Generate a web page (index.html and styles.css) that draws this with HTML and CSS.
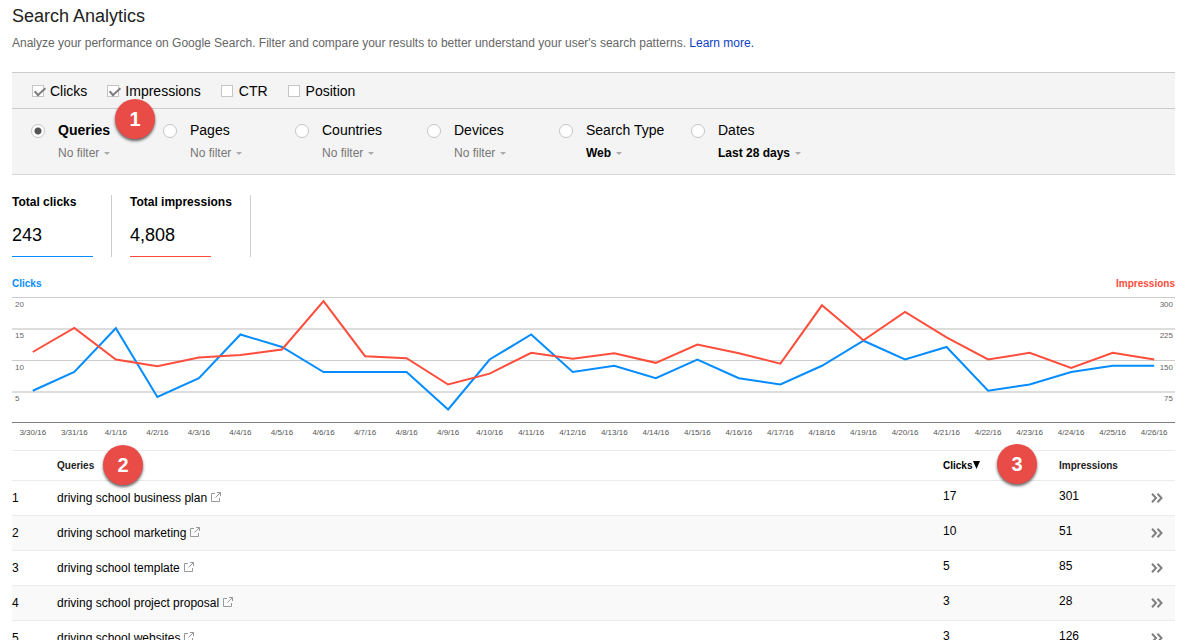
FILE: index.html
```
<!DOCTYPE html>
<html lang="en">
<head>
  <meta charset="UTF-8">
  <title>Search Analytics</title>
  <meta name="viewport" content="width=device-width, initial-scale=1.0">
  <link rel="stylesheet" href="styles.css">
</head>
<body>

<div class="container">
  <h1>Search Analytics</h1>
  <p class="intro">Analyze your performance on Google Search. Filter and compare your results to better understand your user's search patterns. <a href="#">Learn more.</a></p>

  <form class="panel">
    <div class="metrics">
      <label><input type="checkbox" checked>Clicks</label>
      <label><input type="checkbox" checked>Impressions</label>
      <label><input type="checkbox">CTR</label>
      <label><input type="checkbox">Position</label>
    </div>
    <div class="dimensions">
      <div class="dimension">
        <input type="radio" name="dimension" id="dim-queries" checked>
        <label for="dim-queries">Queries</label>
        <span class="filter"><select aria-label="Queries filter"><option>No filter</option></select></span>
        <span class="badge badge-1">1</span>
      </div>
      <div class="dimension">
        <input type="radio" name="dimension" id="dim-pages">
        <label for="dim-pages">Pages</label>
        <span class="filter"><select aria-label="Pages filter"><option>No filter</option></select></span>
      </div>
      <div class="dimension">
        <input type="radio" name="dimension" id="dim-countries">
        <label for="dim-countries">Countries</label>
        <span class="filter"><select aria-label="Countries filter"><option>No filter</option></select></span>
      </div>
      <div class="dimension">
        <input type="radio" name="dimension" id="dim-devices">
        <label for="dim-devices">Devices</label>
        <span class="filter"><select aria-label="Devices filter"><option>No filter</option></select></span>
      </div>
      <div class="dimension">
        <input type="radio" name="dimension" id="dim-type">
        <label for="dim-type">Search Type</label>
        <span class="filter active"><select aria-label="Search type filter"><option>Web</option></select></span>
      </div>
      <div class="dimension">
        <input type="radio" name="dimension" id="dim-dates">
        <label for="dim-dates">Dates</label>
        <span class="filter active"><select aria-label="Dates filter"><option>Last 28 days</option></select></span>
      </div>
    </div>
  </form>

  <div class="totals">
    <div class="total clicks">
      <h2>Total clicks</h2>
      <p>243</p>
    </div>
    <div class="total impressions">
      <h2>Total impressions</h2>
      <p>4,808</p>
    </div>
  </div>

  <div class="legend">
    <span class="legend-clicks">Clicks</span>
    <span class="legend-impressions">Impressions</span>
  </div>
  <div class="chart">
    <div class="band"><span>20</span><span>300</span></div>
    <div class="band"><span>15</span><span>225</span></div>
    <div class="band"><span>10</span><span>150</span></div>
    <div class="band"><span>5</span><span>75</span></div>
    <svg class="lines" viewBox="0 0 1120 125" preserveAspectRatio="none">
      <polyline id="clicksLine" class="line-clicks"/>
      <polyline id="impressionsLine" class="line-impressions"/>
    </svg>
  </div>
  <div class="dates" id="dates"></div>

  <table id="queryTable">
    <thead>
      <tr>
        <th class="col-num"></th>
        <th>Queries<span class="badge badge-2">2</span></th>
        <th class="col-clicks sorted">Clicks<svg width="7" height="8" viewBox="0 0 7 8"><path d="M0 0h7L3.5 8z"/></svg><span class="badge badge-3">3</span></th>
        <th class="col-impressions">Impressions</th>
        <th class="col-more"></th>
      </tr>
    </thead>
    <tbody></tbody>
  </table>
</div>

<script>
  const clicks = [5, 8, 15, 4, 7, 14, 12, 8, 8, 8, 2, 10, 14, 8, 9, 7, 10, 7, 6, 9, 13, 10, 12, 5, 6, 8, 9, 9];
  const impressions = [168, 226, 150, 134, 155, 161, 174, 290, 158, 153, 90, 116, 166, 152, 165, 142, 186, 165, 140, 280, 196, 264, 203, 150, 166, 130, 166, 150];

  const queries = [
    { text: "driving school business plan", clicks: 17, impressions: 301 },
    { text: "driving school marketing", clicks: 10, impressions: 51 },
    { text: "driving school template", clicks: 5, impressions: 85 },
    { text: "driving school project proposal", clicks: 3, impressions: 28 },
    { text: "driving school websites", clicks: 3, impressions: 126 }
  ];

  // each day takes 40 units of the 1120 wide viewBox, the point sits in the middle
  function points(values, max) {
    return values.map((v, i) => `${i * 40 + 20},${125 - (v / max) * 125}`).join(" ");
  }

  function renderChart() {
    document.getElementById("clicksLine").setAttribute("points", points(clicks, 20));
    document.getElementById("impressionsLine").setAttribute("points", points(impressions, 300));

    const dates = document.getElementById("dates");
    clicks.forEach((_, i) => {
      const day = new Date(2016, 2, 30 + i);
      const label = document.createElement("span");
      label.textContent = `${day.getMonth() + 1}/${day.getDate()}/16`;
      dates.appendChild(label);
    });
  }

  function renderTable() {
    const tableBody = document.querySelector("#queryTable tbody");
    queries.forEach((query, index) => {
      const row = document.createElement("tr");
      row.innerHTML = `
        <td>${index + 1}</td>
        <td>${query.text}<a class="open" href="#" aria-label="Open"><svg width="10" height="10" viewBox="0 0 10 10"><path d="M4 1.5H.5v8h8V6M6 .5h3.5V4M9.5.5l-5 5"/></svg></a></td>
        <td class="value">${query.clicks}</td>
        <td class="value">${query.impressions}</td>
        <td class="more"><button type="button" aria-label="Details"><svg width="12" height="10" viewBox="0 0 12 10"><path d="M1 .8L5 5 1 9.2M6.500.8l4 4.200-4 4.200"/></svg></button></td>
      `;
      tableBody.appendChild(row);
    });
  }

  renderChart();
  renderTable();
</script>

</body>
</html>
```
FILE: styles.css
```
* { box-sizing: border-box; }
body { margin: 0; background: #fff; color: #000; font-family: Arial, "Liberation Sans", sans-serif; font-size: 12px; }
h1, h2, p { margin: 0; }
.container { padding: 6px 17px 0 12px; }
h1 { font-size: 18px; line-height: 20px; font-weight: normal; color: #222; }
.intro { margin-top: 9px; line-height: 16px; color: #666; }
.intro a { color: #0b40c4; text-decoration: none; }

/* filter panel */
.panel { margin-top: 21px; background: #f4f4f4; border-top: 1px solid #ccc; border-bottom: 1px solid #d8d8d8; }
.metrics { display: flex; gap: 20px; height: 36px; padding-left: 20px; border-bottom: 1px solid #ccc; }
.metrics label { display: flex; align-items: center; gap: 6px; font-size: 14px; }
.panel input { appearance: none; margin: 0; background: #fff; border: 1px solid #c6c6c6; }
.metrics input { position: relative; width: 12px; height: 12px; }
.metrics input:checked::after {
  content: "";
  position: absolute;
  left: 4px;
  top: -1px;
  width: 4px;
  height: 9px;
  border: solid #808080;
  border-width: 0 2px 2px 0;
  transform: rotate(48deg);
}
.dimensions { display: flex; padding: 11px 0 13px 19px; }
.dimension {
  position: relative;
  display: grid;
  grid-template-columns: 14px 1fr;
  column-gap: 13px;
  row-gap: 5px;
  align-items: center;
  width: 132px;
}
.dimension input { width: 14px; height: 14px; margin-top: 2px; border-radius: 50%; }
.dimension input:checked { background: radial-gradient(circle, #555 3px, #fff 4px); }
.dimension label { font-size: 14px; line-height: 20px; }
.dimension input:checked + label { font-weight: bold; }
.filter { grid-column: 2; display: flex; align-items: center; gap: 4px; height: 16px; color: #777; }
.filter::after { content: ""; border: 3px solid transparent; border-top-color: #aaa; border-bottom: 0; }
.filter select { appearance: none; border: 0; padding: 0; background: none; color: inherit; font: inherit; }
.filter.active { color: #000; font-weight: bold; }

/* numbered markers */
.badge {
  position: absolute;
  width: 40px;
  height: 40px;
  border-radius: 50%;
  background: #e94b46;
  box-shadow: 0 2px 3px rgba(0, 0, 0, 0.6);
  color: #fff;
  font-size: 20px;
  line-height: 40px;
  font-weight: bold;
  text-align: center;
}
.badge-1 { left: 84px; top: -21px; }
.badge-2 { left: 46px; top: -6px; }
.badge-3 { left: 54px; top: -7px; }

/* totals */
.totals { display: flex; gap: 18px; margin-top: 20px; }
.total { padding-right: 18px; border-right: 1px solid #ccc; }
.total h2 { font-size: 12px; line-height: 14px; }
.total p { width: 81px; height: 48px; padding-top: 16px; font-size: 18px; line-height: 20px; border-bottom: 1px solid; }
.clicks p { border-color: #058dff; }
.impressions p { border-color: #ff4d3b; }

/* chart */
.legend { display: flex; justify-content: space-between; margin-top: 20px; font-size: 10px; line-height: 14px; font-weight: bold; }
.legend-clicks { color: #058dff; }
.legend-impressions { color: #ff4d3b; }
.chart { position: relative; display: grid; grid-template-rows: repeat(4, 1fr); height: 126px; margin-top: 6px; border-bottom: 1px solid #808080; }
.band { display: flex; justify-content: space-between; padding: 2px 2px 0 3px; border-top: 1px solid #ccc; color: #666; font-size: 8px; line-height: 10px; }
.band:nth-child(even) { padding-top: 1px; border-top: 2px solid #ddd; }
.lines { position: absolute; left: 0; top: 0; width: 100%; height: 125px; overflow: visible; }
.lines polyline { fill: none; stroke-width: 2px; vector-effect: non-scaling-stroke; }
.line-clicks { stroke: #058dff; }
.line-impressions { stroke: #ff4d3b; }
.dates { display: grid; grid-template-columns: repeat(28, 1fr); margin-top: 5px; color: #555; font-size: 8px; line-height: 10px; text-align: center; }

/* queries */
table { width: 100%; margin-top: 12px; border-collapse: separate; border-spacing: 0; table-layout: fixed; }
th, td { padding: 0; text-align: left; border-top: 1px solid #ebebeb; }
th { position: relative; height: 30px; font-size: 10px; color: #222; }
td { height: 35px; }
tbody tr:nth-child(even) { background: #f9f9f9; }
.col-num { width: 45px; }
.col-clicks { width: 116px; }
.col-impressions { width: 92px; }
.col-more { width: 24px; }
.sorted { color: #000; }
.sorted svg { margin-left: 1px; }
.value { padding-bottom: 4px; }
.open { margin-left: 4px; }
.open svg { fill: none; stroke: #999; }
.more button { display: block; padding: 0; border: 0; background: none; cursor: pointer; }
.more svg { display: block; fill: none; stroke: #808080; stroke-width: 2; }
```
